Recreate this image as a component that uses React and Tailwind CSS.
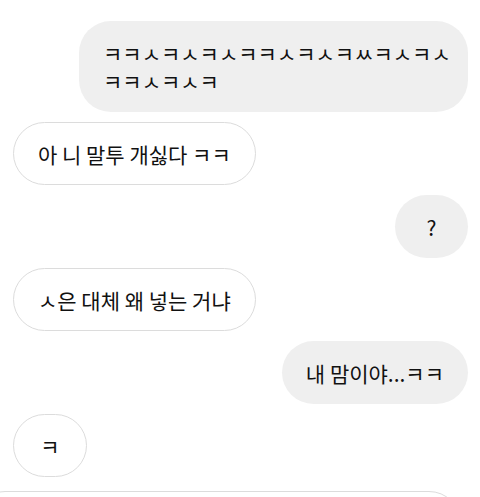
export default function App() {
  const font = { fontFamily: '"Noto Sans CJK KR", "Noto Sans", sans-serif' };
  const gray = "bg-[#efefef] rounded-[32px] px-6 py-[17.5px] text-[21px] leading-[28px] text-[#111111]";
  const white = "bg-white border border-[#dcdcdc] rounded-[32px] px-6 py-[16.5px] text-[21px] leading-[28px] text-[#111111]";
  return (
    <div className="h-[497px] w-[480px] overflow-hidden bg-white" style={font}>
      <div className="flex flex-col gap-[10px] pt-[21px] pl-[13px] pr-[12px]">
        <div className={`${gray} self-end w-[389px] whitespace-nowrap`}>
          <span className="block">ㅋㅋㅅㅋㅅㅋㅅㅋㅋㅅㅋㅅㅋㅆㅋㅅㅋㅅ</span>
          <span className="block">ㅋㅋㅅㅋㅅㅋ</span>
        </div>
        <div className={`${white} self-start whitespace-nowrap`}>아 니 말투 개싫다 ㅋㅋ</div>
        <div className={`${gray} self-end w-[73px] flex justify-center`}>?</div>
        <div className={`${white} self-start whitespace-nowrap`}>ㅅ은 대체 왜 넣는 거냐</div>
        <div className={`${gray} self-end whitespace-nowrap`}>내 맘이야...ㅋㅋ</div>
        <div className={`${white} self-start w-[74px] flex justify-center`}>ㅋ</div>
        <div className="mt-[4px] -ml-[40px] w-[488px] h-[64px] bg-white border border-[#dcdcdc] rounded-[32px]"></div>
      </div>
    </div>
  );
}
